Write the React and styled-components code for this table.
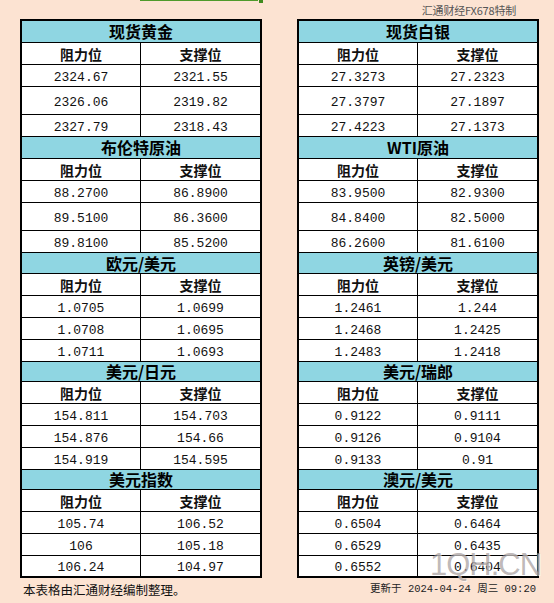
import React from 'react'
import styled, { createGlobalStyle } from 'styled-components'

const GlobalStyle = createGlobalStyle`
  html, body {
    margin: 0;
    padding: 0;
    background: #fce3d2;
  }
  body {
    font-family: "Noto Sans CJK SC", "Liberation Sans", sans-serif;
    color: #000;
  }
`

const Page = styled.div`
  position: relative;
  width: 554px;
  height: 603px;
  overflow: hidden;
  background: #fce3d2;
`

const TopBar = styled.div`
  display: flex;
  height: 19px;
  padding-left: 140px;
  padding-right: 38px;
`

const GreenLine = styled.div`
  width: 118px;
  height: 1px;
  background: #4f9a2a;
`

const GreenMark = styled.div`
  width: 4px;
  height: 3px;
  margin-left: 1px;
  background: #3f8a1f;
`

const Brand = styled.div`
  margin-left: auto;
  align-self: center;
  margin-top: 2px;
  font-family: "Noto Sans CJK SC", sans-serif;
  font-size: 11px;
  line-height: 1;
  color: #555;
  letter-spacing: -0.2px;
`

const Tables = styled.div`
  display: flex;
  gap: 35px;
  padding-left: 20px;
`

const Table = styled.div`
  width: 242px;
  box-sizing: border-box;
  border: 2px solid #000;
  background: #fff;
`

const Title = styled.div`
  box-sizing: border-box;
  height: ${({ h }) => h}px;
  display: flex;
  align-items: center;
  justify-content: center;
  background: #8fd6e2;
  border-bottom: 1px solid #000;
  font-size: 16px;
  font-weight: 700;
  line-height: 1;
  padding-bottom: 1px;
`

const Row = styled.div`
  box-sizing: border-box;
  height: ${({ h }) => h}px;
  display: grid;
  grid-template-columns: 119px 1fr;
  border-bottom: ${({ last }) => last ? 'none' : '1px solid #000'};
`

const Cell = styled.div`
  display: flex;
  align-items: center;
  justify-content: center;
  line-height: 1;
  padding-top: ${({ head }) => head ? '0' : '3px'};
  font-family: ${({ head }) => head ? '"Noto Sans CJK SC", sans-serif' : '"Liberation Mono", "DejaVu Sans Mono", monospace'};
  font-size: ${({ head }) => head ? '14px' : '13px'};
  font-weight: ${({ head }) => head ? 700 : 400};
  color: #111;

  &:first-child {
    border-right: 1px solid #000;
  }
`

const Footer = styled.div`
  display: flex;
  justify-content: space-between;
  align-items: center;
  padding: 6px 18px 0 23px;
`

const Note = styled.div`
  font-family: "Noto Sans CJK SC", sans-serif;
  font-size: 12.5px;
  line-height: 1;
  color: #111;
`

const Updated = styled.div`
  font-family: "Liberation Mono", "Noto Sans CJK SC", monospace;
  font-size: 10.5px;
  line-height: 1;
  color: #222;
  margin-top: -2px;
`

const Watermark = styled.div`
  position: absolute;
  left: 430px;
  top: 549px;
  font-family: "Liberation Sans", Arial, sans-serif;
  font-size: 31px;
  line-height: 1;
  color: rgba(150, 140, 140, 0.62);
  text-shadow: 1px 1px 0 rgba(255, 255, 255, 0.6);
  letter-spacing: -1px;
  pointer-events: none;
`

const left = [
  { name: '现货黄金', t: 22, rows: [22, 22, 28, 22], data: [['2324.67', '2321.55'], ['2326.06', '2319.82'], ['2327.79', '2318.43']] },
  { name: '布伦特原油', t: 22, rows: [22, 22, 28, 22], data: [['88.2700', '86.8900'], ['89.5100', '86.3600'], ['89.8100', '85.5200']] },
  { name: '欧元/美元', t: 21, rows: [22, 22, 22, 22], data: [['1.0705', '1.0699'], ['1.0708', '1.0695'], ['1.0711', '1.0693']] },
  { name: '美元/日元', t: 20, rows: [22, 22, 22, 22], data: [['154.811', '154.703'], ['154.876', '154.66'], ['154.919', '154.595']] },
  { name: '美元指数', t: 20, rows: [22, 22, 22, 20], data: [['105.74', '106.52'], ['106', '105.18'], ['106.24', '104.97']], end: true },
]

const right = [
  { name: '现货白银', t: 22, rows: [22, 22, 28, 22], data: [['27.3273', '27.2323'], ['27.3797', '27.1897'], ['27.4223', '27.1373']] },
  { name: 'WTI原油', t: 22, rows: [22, 22, 28, 22], data: [['83.9500', '82.9300'], ['84.8400', '82.5000'], ['86.2600', '81.6100']] },
  { name: '英镑/美元', t: 21, rows: [22, 22, 22, 22], data: [['1.2461', '1.244'], ['1.2468', '1.2425'], ['1.2483', '1.2418']] },
  { name: '美元/瑞郎', t: 20, rows: [22, 22, 22, 22], data: [['0.9122', '0.9111'], ['0.9126', '0.9104'], ['0.9133', '0.91']] },
  { name: '澳元/美元', t: 20, rows: [22, 22, 22, 20], data: [['0.6504', '0.6464'], ['0.6529', '0.6435'], ['0.6552', '0.6404']], end: true },
]

function Section({ s }) {
  return (
    <>
      <Title h={s.t}>{s.name}</Title>
      <Row h={s.rows[0]}>
        <Cell head>阻力位</Cell>
        <Cell head>支撑位</Cell>
      </Row>
      {s.data.map((d, i) => (
        <Row key={i} h={s.rows[i + 1]} last={s.end && i === 2}>
          <Cell>{d[0]}</Cell>
          <Cell>{d[1]}</Cell>
        </Row>
      ))}
    </>
  )
}

export default function App() {
  return (
    <Page>
      <GlobalStyle />
      <TopBar>
        <GreenLine />
        <GreenMark />
        <Brand>汇通财经FX678特制</Brand>
      </TopBar>
      <Tables>
        <Table>
          {left.map(s => <Section key={s.name} s={s} />)}
        </Table>
        <Table>
          {right.map(s => <Section key={s.name} s={s} />)}
        </Table>
      </Tables>
      <Footer>
        <Note>本表格由汇通财经编制整理。</Note>
        <Updated>更新于 2024-04-24 周三 09:20</Updated>
      </Footer>
      <Watermark>1QH.CN</Watermark>
    </Page>
  )
}
